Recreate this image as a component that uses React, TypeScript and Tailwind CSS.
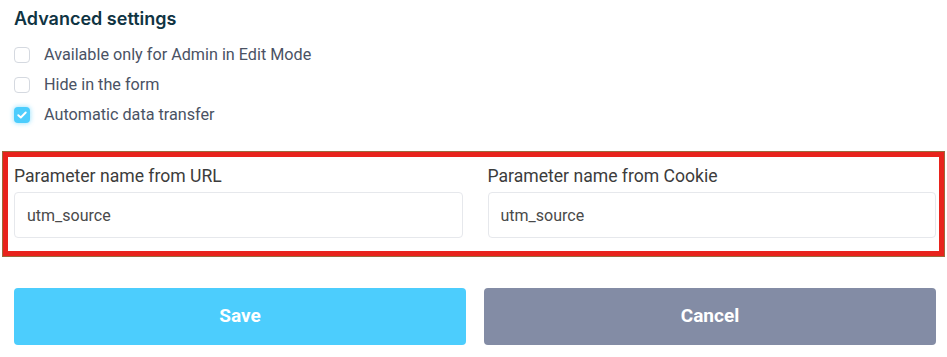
import { useState } from 'react';

type Opt = { label: string; checked: boolean };

const initial: Opt[] = [
    { label: 'Available only for Admin in Edit Mode', checked: false },
    { label: 'Hide in the form', checked: false },
    { label: 'Automatic data transfer', checked: true },
];

function Check({ checked }: { checked: boolean }) {
    if (checked) {
        return (
            <span className="w-4 h-4 rounded-[4px] bg-[#4ccdfd] shadow-[0_0_4px_1px_rgba(76,205,253,0.45)] flex items-center justify-center">
                <svg width="10" height="8" viewBox="0 0 10 8" fill="none">
                    <path d="M1.3 4.2 3.8 6.5 8.7 1.5" stroke="white" strokeWidth="1.9" strokeLinecap="round" strokeLinejoin="round" />
                </svg>
            </span>
        );
    }
    return <span className="w-4 h-4 rounded-[4px] border border-[#d5d9e0] bg-white" />;
}

export default function App() {
    const [opts, setOpts] = useState(initial);

    return (
        <div className="w-[947px] h-[357px] bg-white font-['Roboto',sans-serif] overflow-hidden">
            <div className="pl-[14px] pt-[7px]">
                <h2 className="font-['Inter',sans-serif] font-semibold text-[18px] leading-[24px] text-[#0f3443]">Advanced settings</h2>
                <div className="mt-[16px] flex flex-col gap-[14px]">
                    {opts.map((o, i) => (
                        <label
                            key={o.label}
                            className="flex items-center gap-[14px] h-4 cursor-pointer"
                            onClick={() => setOpts(opts.map((x, j) => (j === i ? { ...x, checked: !x.checked } : x)))}
                        >
                            <Check checked={o.checked} />
                            <span className="text-[16.2px] text-[#4a5264] leading-none">{o.label}</span>
                        </label>
                    ))}
                </div>
            </div>

            <div className="mt-[29px] ml-[3px] w-[941px] h-[104px] border-[5px] border-[#e8231c] shadow-[0_0_0_1px_#9c6a3c] pl-[6px] pr-[3px] pt-[8px]">
                <div className="grid grid-cols-2 gap-[25px]">
                    <div>
                        <div className="text-[17.6px] leading-[22px] text-[#3c3c3c]">Parameter name from URL</div>
                        <input
                            defaultValue="utm_source"
                            className="mt-[5px] w-full h-[46px] border border-[#e6e8ec] rounded-[4px] px-[12px] text-[16px] text-[#4a4a4a] outline-none font-['Roboto',sans-serif]"
                        />
                    </div>
                    <div>
                        <div className="text-[17.6px] leading-[22px] text-[#3c3c3c]">Parameter name from Cookie</div>
                        <input
                            defaultValue="utm_source"
                            className="mt-[5px] w-full h-[46px] border border-[#e6e8ec] rounded-[4px] px-[12px] text-[16px] text-[#4a4a4a] outline-none font-['Roboto',sans-serif]"
                        />
                    </div>
                </div>
            </div>

            <div className="ml-[14px] mt-[32px] w-[922px] grid grid-cols-2 gap-[18px]">
                <button className="h-[57px] rounded-[4px] bg-[#4ccdfd] text-white font-bold text-[19px]">Save</button>
                <button className="h-[57px] rounded-[4px] bg-[#838ca5] text-white font-bold text-[19px]">Cancel</button>
            </div>
        </div>
    );
}
